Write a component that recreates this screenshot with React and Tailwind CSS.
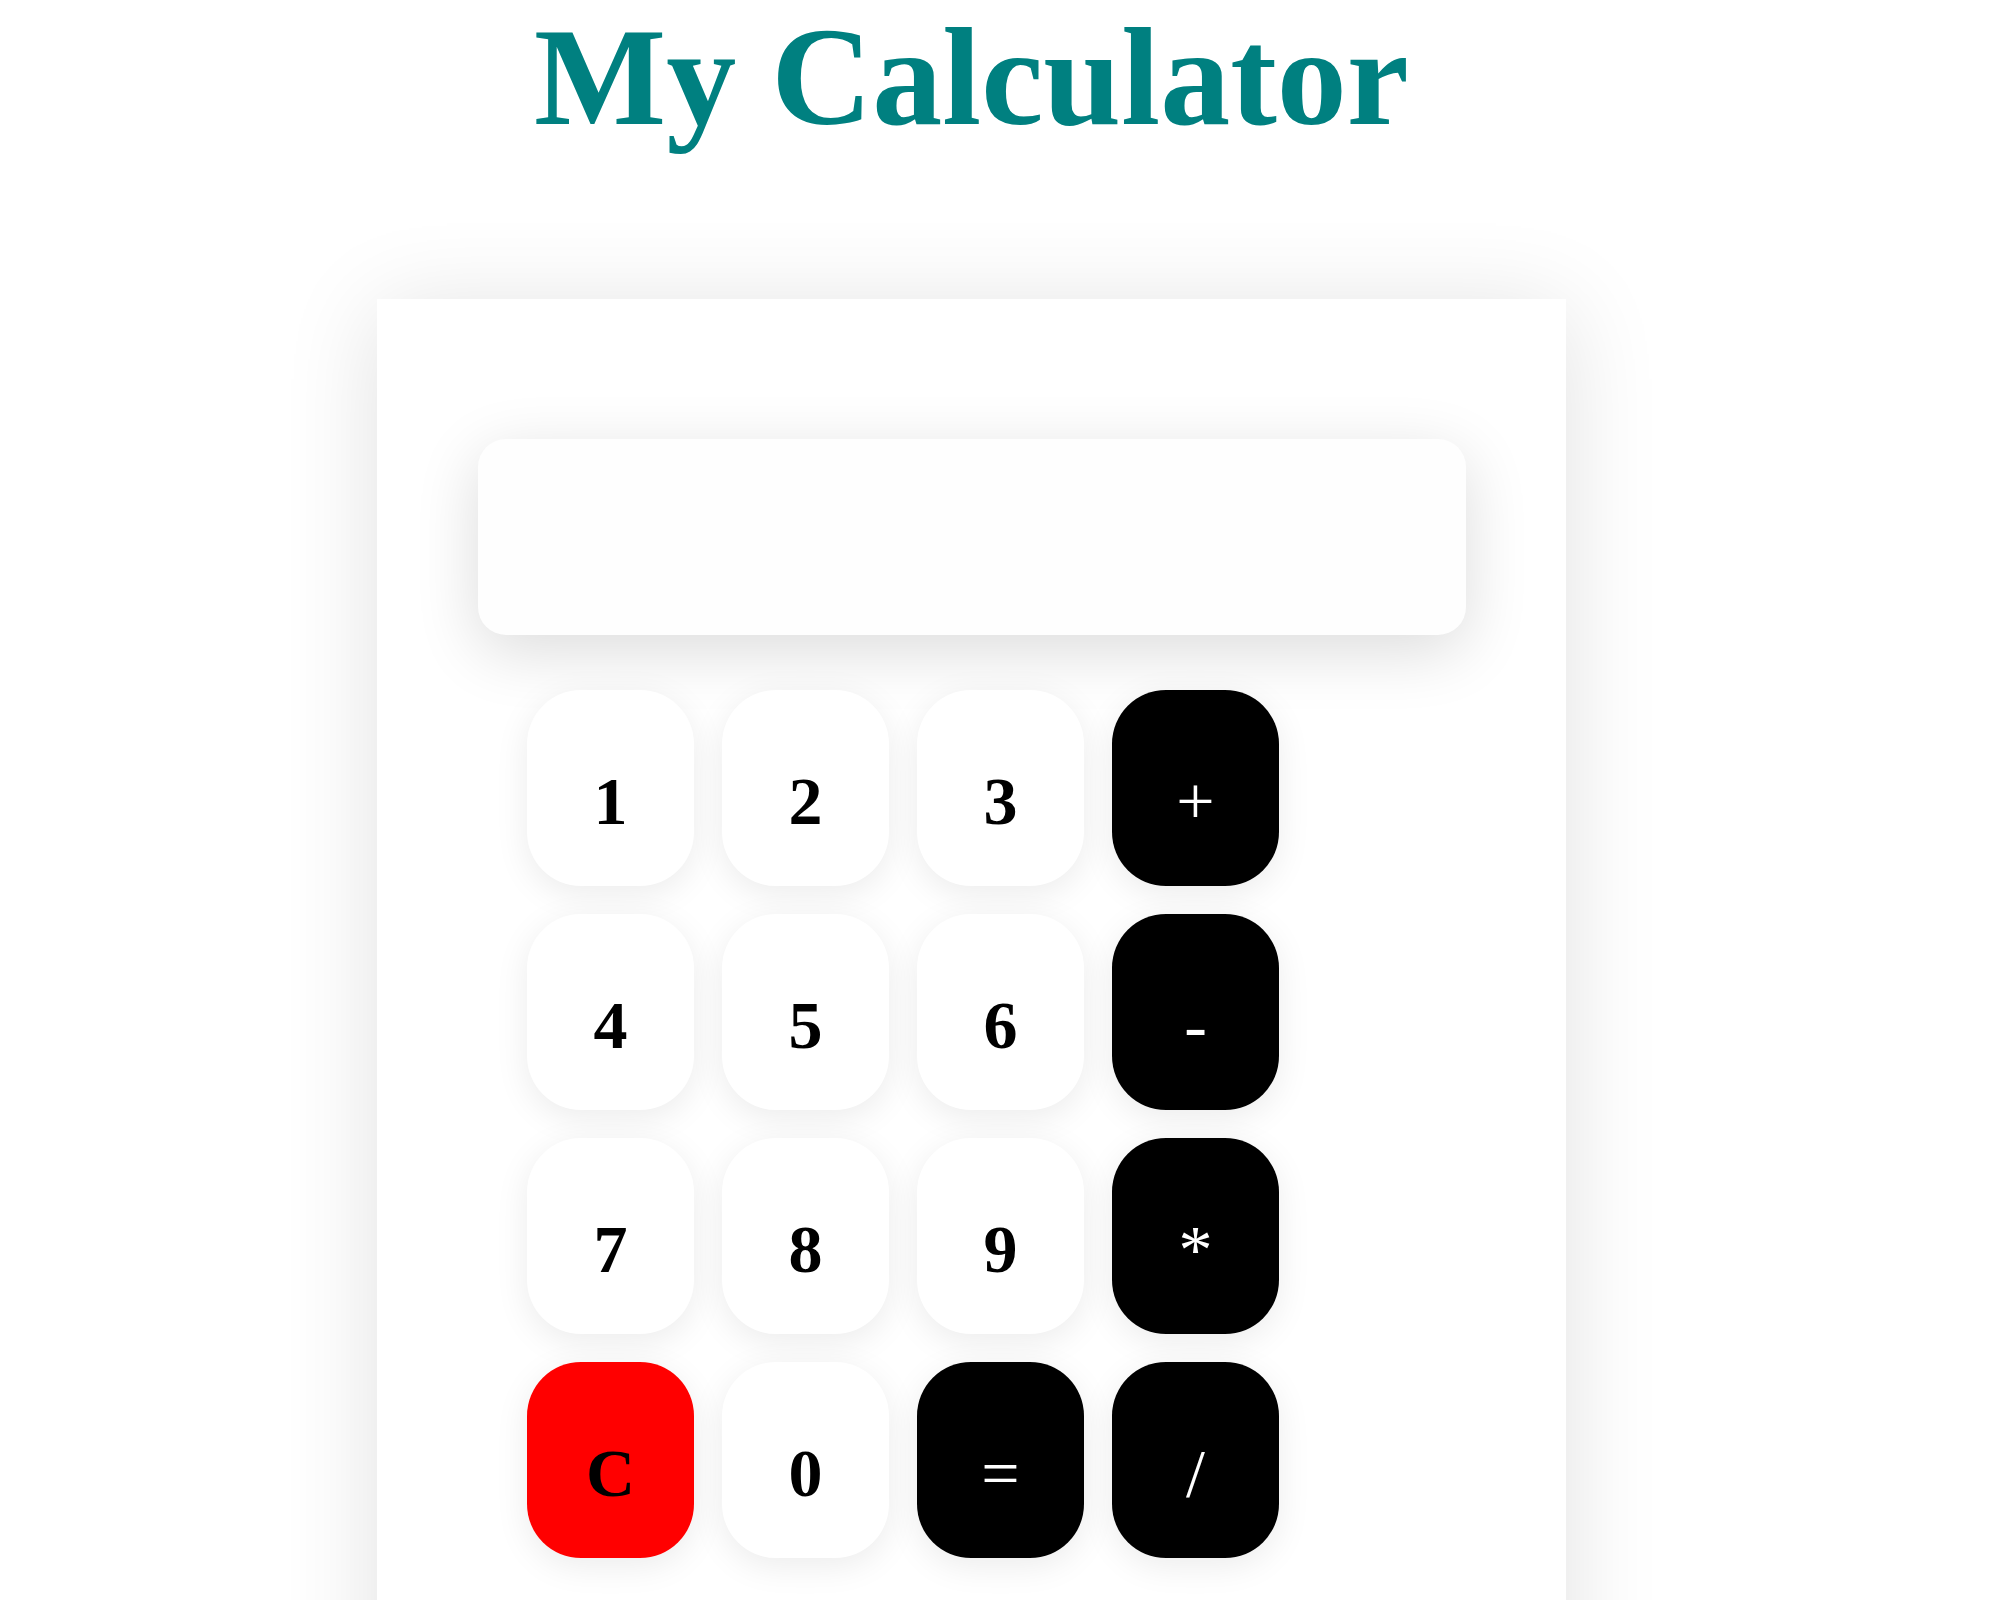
const keys = [
  { label: "1" },
  { label: "2" },
  { label: "3" },
  { label: "+", kind: "op" },
  { label: "4" },
  { label: "5" },
  { label: "6" },
  { label: "-", kind: "op" },
  { label: "7" },
  { label: "8" },
  { label: "9" },
  { label: "*", kind: "op" },
  { label: "C", kind: "clear" },
  { label: "0" },
  { label: "=", kind: "op" },
  { label: "/", kind: "op" },
];

function Key({ label, kind }) {
  let look = "bg-white text-black font-bold";
  if (kind === "op") look = "bg-black text-white font-normal";
  if (kind === "clear") look = "bg-[#ff0000] text-black font-bold";

  return (
    <button
      className={`flex h-[196px] w-[167px] items-center justify-center rounded-[54px] pt-[26px] text-[68px] shadow-[0_8px_34px_rgba(0,0,0,0.08)] ${look}`}
    >
      {label}
    </button>
  );
}

export default function App() {
  return (
    <div className="min-h-[1600px] w-[1943px] overflow-hidden bg-white font-['Liberation_Serif','Times_New_Roman',serif]">
      <div className="flex flex-col items-center">
        <h1 className="mt-[7px] text-[140px] font-bold leading-none text-[#008080]">
          My Calculator
        </h1>
        <div className="mt-[152px] h-[1400px] w-[1189px] bg-white pl-[101px] pr-[100px] pt-[140px] shadow-[0_10px_90px_rgba(0,0,0,0.12)]">
          <div className="h-[196px] w-full rounded-[28px] bg-[#fefefe] shadow-[0_16px_64px_rgba(0,0,0,0.14)]" />
          <div className="mt-[55px] ml-[49px] grid w-fit grid-cols-[repeat(4,167px)] gap-x-[28px] gap-y-[28px]">
            {keys.map((k) => (
              <Key key={k.label} label={k.label} kind={k.kind} />
            ))}
          </div>
        </div>
      </div>
    </div>
  );
}
